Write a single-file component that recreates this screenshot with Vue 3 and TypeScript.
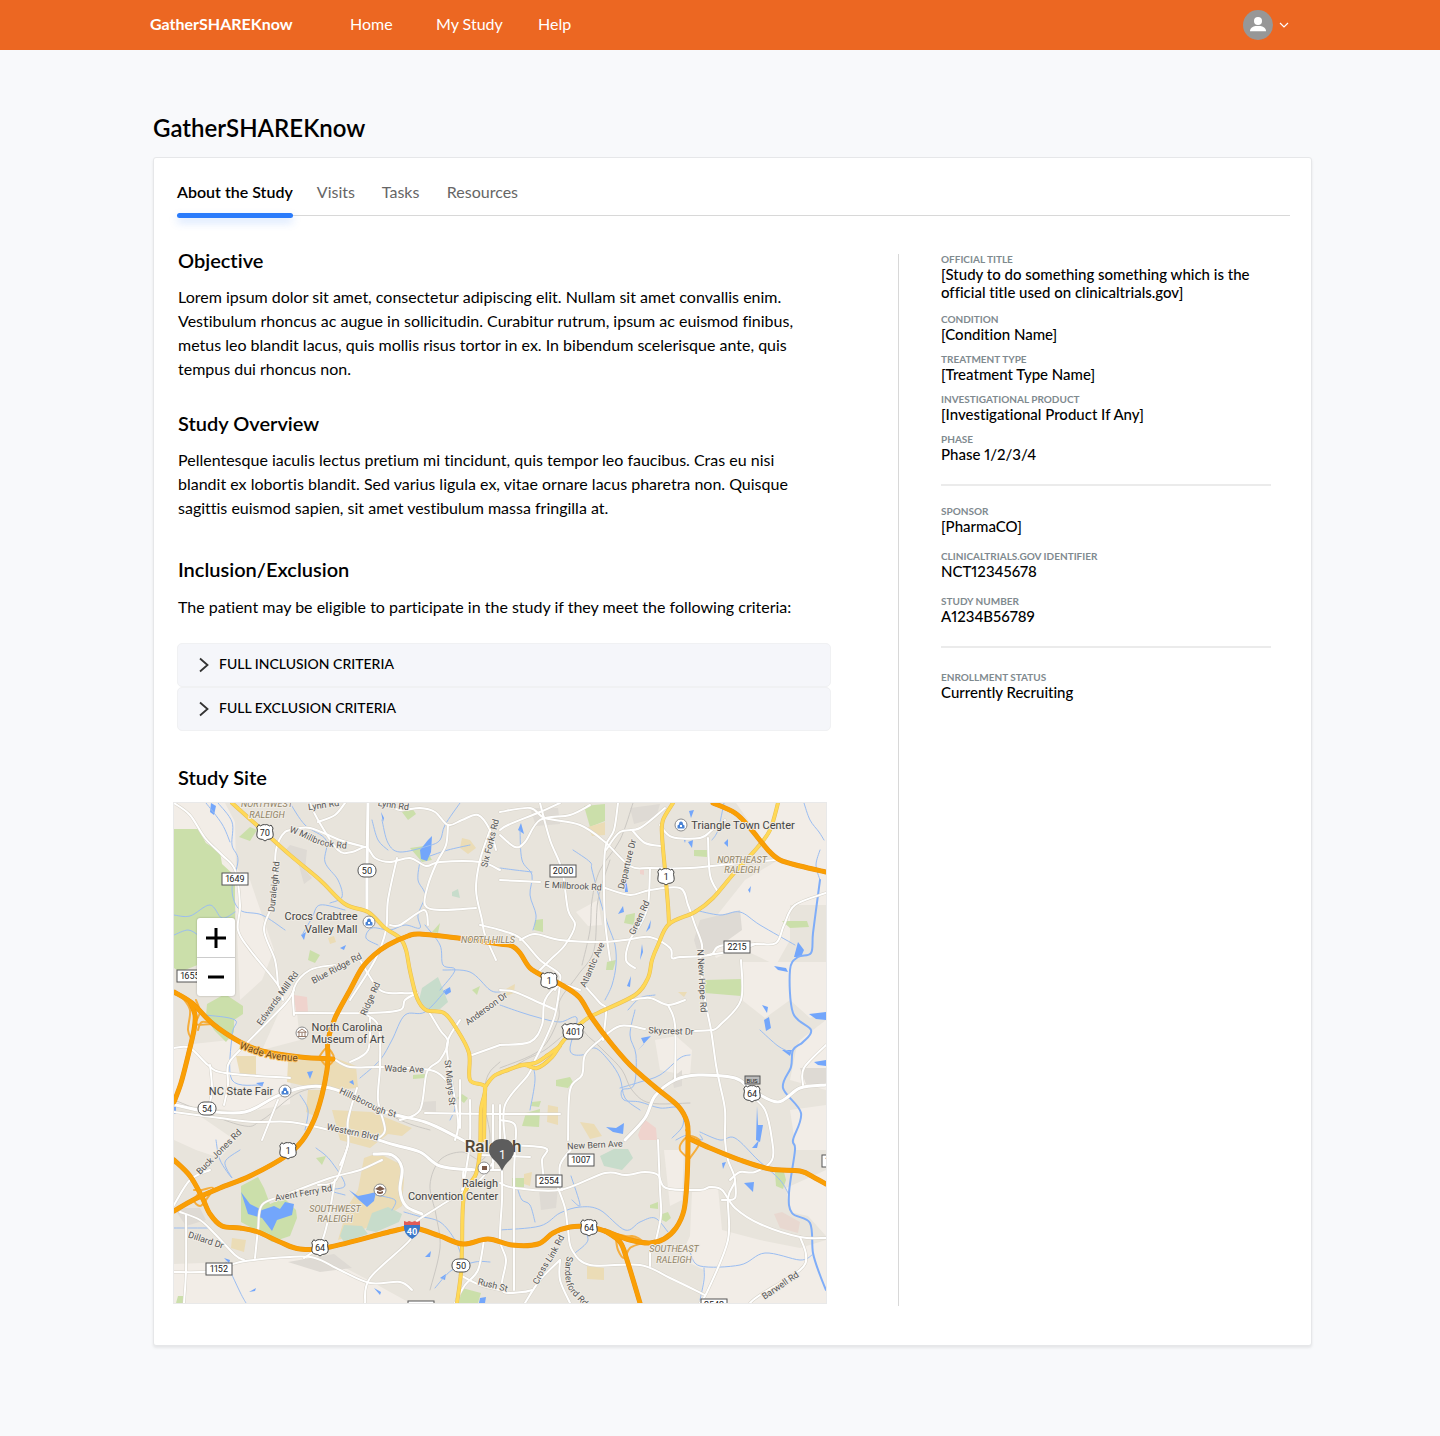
<script setup lang="ts">
import { ref } from 'vue'

interface Detail {
  label: string
  value: string
}
interface Area {
  fill: string
  points: string
}
interface MapLabel {
  text: string
  x: number
  y: number
  angle?: number
  kind?: string
}
interface CurvedLabel {
  id: string
  text: string
  path: string
}
interface Shield {
  kind: 'box' | 'oval' | 'us'
  text: string
  x: number
  y: number
}

const tabs = ['About the Study', 'Visits', 'Tasks', 'Resources']
const activeTab = ref('About the Study')
const criteria = ['FULL INCLUSION CRITERIA', 'FULL EXCLUSION CRITERIA']

const detailGroups: Detail[][] = [
  [
    { label: 'OFFICIAL TITLE', value: '[Study to do something something which is the official title used on clinicaltrials.gov]' },
    { label: 'CONDITION', value: '[Condition Name]' },
    { label: 'TREATMENT TYPE', value: '[Treatment Type Name]' },
    { label: 'INVESTIGATIONAL PRODUCT', value: '[Investigational Product If Any]' },
    { label: 'PHASE', value: 'Phase 1/2/3/4' }
  ],
  [
    { label: 'SPONSOR', value: '[PharmaCO]' },
    { label: 'CLINICALTRIALS.GOV IDENTIFIER', value: 'NCT12345678' },
    { label: 'STUDY NUMBER', value: 'A1234B56789' }
  ],
  [{ label: 'ENROLLMENT STATUS', value: 'Currently Recruiting' }]
]

// Turns a list of waypoints into a rounded path (Catmull-Rom to Bezier).
function curve(points: string): string {
  const p = points.split(' ').map((s) => s.split(',').map(Number))
  let d = `M${p[0][0]} ${p[0][1]}`
  for (let i = 0; i < p.length - 1; i++) {
    const a = p[Math.max(i - 1, 0)]
    const b = p[i]
    const c = p[i + 1]
    const e = p[Math.min(i + 2, p.length - 1)]
    d += `C${b[0] + (c[0] - a[0]) / 6} ${b[1] + (c[1] - a[1]) / 6} ${c[0] - (e[0] - b[0]) / 6} ${c[1] - (e[1] - b[1]) / 6} ${c[0]} ${c[1]}`
  }
  return d
}

const pale = '#f2ede7'
const park = '#cbdfaa'
const tan = '#ebdcb6'
const teal = '#c7dccb'
const grey = '#dedad4'
const lake = '#73a6fb'

const areas: Area[] = [
  { fill: pale, points: '174,803 225,803 235,822 236,868 250,880 262,915 274,950 262,980 240,1000 236,910 232,880 205,845 198,829 174,829' },
  { fill: pale, points: '174,1046 230,1040 262,1052 291,1062 290,1104 245,1112 174,1104' },
  { fill: pale, points: '286,988 294,985 300,1040 262,1050 280,1010' },
  { fill: pale, points: '174,1264 232,1262 262,1260 300,1256 334,1262 372,1282 410,1303 174,1303' },
  { fill: pale, points: '174,1112 200,1116 235,1140 220,1158 196,1150 174,1140' },
  { fill: pale, points: '736,803 826,803 826,905 790,905 790,940 776,965 740,948 716,958 706,940 718,914 745,880 775,862 755,830' },
  { fill: pale, points: '742,962 826,962 826,1012 810,1018 790,1000 765,1018 742,1000' },
  { fill: pale, points: '800,1040 826,1020 826,1090 790,1080 796,1050' },
  { fill: pale, points: '655,1040 676,1036 692,1050 690,1076 660,1070' },
  { fill: pale, points: '692,1192 718,1188 722,1230 760,1240 800,1248 826,1240 826,1303 700,1303 704,1270 680,1258 690,1236' },
  { fill: pale, points: '786,1188 826,1170 826,1236 808,1216 790,1212' },
  { fill: pale, points: '664,1150 684,1150 682,1200 670,1206' },
  { fill: pale, points: '576,912 598,900 602,925 588,926' },
  { fill: pale, points: '790,1110 826,1105 826,1150 796,1150' },
  { fill: grey, points: '284,852 290,845 307,850 305,870 312,878 304,884 298,862' },
  { fill: grey, points: '700,920 740,910 742,930 700,960 694,940' },
  { fill: grey, points: '530,808 558,808 560,824 536,826' },
  { fill: grey, points: '630,808 660,804 656,818 634,824' },
  { fill: grey, points: '539,1190 558,1188 556,1208 541,1210' },
  { fill: grey, points: '420,1102 436,1101 436,1112 421,1110' },
  { fill: grey, points: '672,1078 682,1070 682,1086 674,1088' },
  { fill: grey, points: '174,1208 200,1208 206,1220 186,1226' },
  { fill: grey, points: '288,1262 334,1254 352,1268 320,1272' },
  { fill: grey, points: '800,1068 826,1068 826,1084 806,1084' },
  { fill: park, points: '174,829 198,829 206,843 220,852 222,864 235,876 235,970 200,964 180,972 174,968' },
  { fill: park, points: '207,1004 225,994 243,1006 243,1014 234,1020 234,1032 226,1042 214,1030 206,1016' },
  { fill: park, points: '241,1186 258,1177 264,1188 270,1204 284,1198 296,1210 297,1218 290,1236 272,1242 252,1228 241,1222' },
  { fill: park, points: '239,837 250,827 257,830 250,841' },
  { fill: park, points: '410,848 424,846 432,860 422,862' },
  { fill: park, points: '402,812 412,808 416,814 408,820' },
  { fill: park, points: '584,806 605,804 605,821 590,827' },
  { fill: park, points: '694,850 707,850 707,857 694,856' },
  { fill: park, points: '782,921 807,921 809,927 790,928' },
  { fill: park, points: '705,980 741,979 741,996 705,993' },
  { fill: park, points: '556,1080 570,1077 573,1082 568,1088 556,1086' },
  { fill: park, points: '522,1126 526,1113 540,1109 539,1127' },
  { fill: park, points: '532,1102 541,1101 539,1107 531,1106' },
  { fill: park, points: '626,915 635,913 634,925 624,923' },
  { fill: park, points: '535,920 543,919 543,932 534,930' },
  { fill: park, points: '310,950 320,955 315,963 308,960' },
  { fill: park, points: '432,932 440,923 438,933' },
  { fill: park, points: '472,990 480,986 477,995' },
  { fill: park, points: '457,1098 462,1094 468,1098 464,1103' },
  { fill: park, points: '413,1075 425,1074 425,1078 413,1079' },
  { fill: park, points: '316,1158 326,1156 322,1165' },
  { fill: park, points: '662,1214 668,1212 671,1218 666,1222 662,1220' },
  { fill: park, points: '650,1205 658,1202 658,1209 650,1208' },
  { fill: park, points: '775,1172 784,1172 786,1180 783,1189 776,1186' },
  { fill: park, points: '512,1178 524,1178 524,1187 512,1187' },
  { fill: park, points: '462,1288 481,1293 478,1303 459,1303' },
  { fill: park, points: '178,1296 184,1296 184,1303 176,1303' },
  { fill: park, points: '607,962 616,960 613,970 606,970' },
  { fill: tan, points: '288,1062 330,1056 356,1066 358,1088 330,1090 300,1085 287,1082' },
  { fill: tan, points: '236,1056 256,1056 256,1076 240,1074' },
  { fill: tan, points: '332,1110 372,1112 412,1128 402,1136 388,1134 370,1148 340,1140' },
  { fill: tan, points: '308,1090 322,1090 318,1118 306,1112' },
  { fill: tan, points: '364,1158 378,1153 400,1164 404,1180 402,1206 378,1222 350,1236 338,1240 348,1206 358,1190' },
  { fill: tan, points: '588,827 605,822 605,835 592,836' },
  { fill: tan, points: '462,838 470,840 476,848 468,854 460,848' },
  { fill: tan, points: '328,938 334,936 336,942 330,944' },
  { fill: tan, points: '587,1266 604,1268 604,1280 587,1279' },
  { fill: tan, points: '580,1122 594,1124 602,1136 590,1139' },
  { fill: tan, points: '548,1105 558,1107 558,1125 547,1122' },
  { fill: tan, points: '232,1238 246,1240 244,1252 231,1248' },
  { fill: tan, points: '504,990 515,984 514,993 506,996' },
  { fill: tan, points: '678,992 687,992 684,997' },
  { fill: tan, points: '524,1174 532,1172 530,1186 524,1184' },
  { fill: teal, points: '372,1213 388,1207 402,1214 399,1222 376,1232 366,1230' },
  { fill: teal, points: '344,1225 362,1226 368,1234 344,1242 340,1236' },
  { fill: teal, points: '422,988 438,977 448,1002 440,1009 428,1010 419,1000' },
  { fill: teal, points: '452,892 458,889 460,898 452,896' },
  { fill: teal, points: '600,1156 614,1149 628,1149 633,1158 622,1170 604,1166' },
  { fill: '#efd3cd', points: '294,995 307,997 308,1012 296,1014' },
  { fill: '#efd3cd', points: '638,1135 644,1119 656,1128 657,1140 640,1140' },
  { fill: '#efd3cd', points: '640,870 644,870 644,875 640,874' },
  { fill: '#e8d8d0', points: '774,1214 782,1212 800,1222 798,1233 780,1228' },
  { fill: lake, points: '241,1192 250,1204 262,1210 274,1206 280,1209 285,1202 294,1204 292,1215 277,1220 272,1231 262,1218 248,1214' },
  { fill: lake, points: '349,1190 358,1196 368,1194 376,1192 374,1201 367,1207 359,1200' },
  { fill: lake, points: '420,850 428,840 432,836 431,852 427,861 421,859' },
  { fill: lake, points: '211,803 216,806 214,815 210,812' },
  { fill: lake, points: '381,812 384,818 383,822' },
  { fill: lake, points: '518,830 521,823 524,834' },
  { fill: lake, points: '307,1072 313,1071 310,1079' },
  { fill: lake, points: '349,1082 353,1080 354,1085' },
  { fill: lake, points: '443,991 450,987 451,992 446,995' },
  { fill: lake, points: '646,932 651,920 650,928' },
  { fill: lake, points: '625,892 625,872 628,892' },
  { fill: lake, points: '618,914 623,906 624,912' },
  { fill: lake, points: '640,960 642,944 643,952' },
  { fill: lake, points: '798,942 804,950 801,957 794,957' },
  { fill: lake, points: '774,966 786,968 788,972 778,970' },
  { fill: lake, points: '762,1005 768,1007 767,1013' },
  { fill: lake, points: '764,1020 769,1017 771,1028 766,1031' },
  { fill: lake, points: '809,1014 826,1012 826,1020 816,1019' },
  { fill: lake, points: '814,1062 826,1060 826,1066 818,1065' },
  { fill: lake, points: '782,1050 792,1050 790,1056' },
  { fill: lake, points: '638,1050 644,1044 641,1038 651,1036' },
  { fill: lake, points: '606,1127 616,1128 624,1123 623,1134 613,1132' },
  { fill: lake, points: '744,1183 754,1182 753,1192' },
  { fill: lake, points: '752,1148 759,1140 757,1148' },
  { fill: lake, points: '722,1163 726,1162 723,1169' },
  { fill: lake, points: '724,843 728,839 728,847' },
  { fill: lake, points: '688,842 693,840 692,848' },
  { fill: lake, points: '683,837 686,838 685,843' },
  { fill: lake, points: '757,1106 758,1125 763,1125 760,1142 756,1140' },
  { fill: lake, points: '425,1257 431,1251 430,1257' },
  { fill: lake, points: '440,1278 446,1274 445,1280' },
  { fill: lake, points: '374,1288 381,1292 380,1295' },
  { fill: lake, points: '249,1292 256,1288 255,1291' },
  { fill: lake, points: '224,1258 230,1260 229,1263' },
  { fill: lake, points: '480,1298 486,1297 485,1303 479,1303' },
  { fill: lake, points: '566,1026 571,1032 567,1030' },
  { fill: lake, points: '627,986 631,976 630,987' },
  { fill: lake, points: '301,935 306,932 304,940' },
  { fill: lake, points: '340,948 346,945 344,950' },
  { fill: lake, points: '256,1083 264,1082 262,1087' },
  { fill: lake, points: '174,1107 176,1107 176,1114 174,1114' },
  { fill: lake, points: '689,811 694,810 691,818' },
  { fill: lake, points: '748,890 751,886 750,893' }
]

const bigRivers: string[] = [
  '820,880 818,895 813,933 811,953 798,957 790,970 793,1013 811,1030 803,1042 793,1050 791,1067 783,1088 801,1113 793,1140 795,1150 789,1193 792,1213 810,1223 813,1253 820,1275 826,1290'
]

const rivers: string[] = [
  '804,803 810,820 819,832 824,840',
  '820,850 816,865 820,880',
  '218,803 232,822 232,845 238,860 232,890 240,910 262,915 285,930',
  '174,915 190,916 210,905 222,918 235,912',
  '174,935 188,930 198,935',
  '206,803 222,824 230,842',
  '290,803 305,825 326,840 325,862 338,880 342,897 330,903',
  '460,803 445,825 440,840 428,846 400,852 388,843 382,820',
  '420,861 418,880 425,895 418,915 420,928 405,925 390,930 372,928 366,938 378,945',
  '345,910 320,905 312,918 302,935',
  '372,820 378,840 388,850',
  '470,845 448,850 430,856',
  '425,925 440,945 443,965 455,970 440,990',
  '446,990 425,1012 405,1015 392,1040 380,1060 360,1078',
  '443,970 470,972 490,990 500,992',
  '500,1005 520,1012 540,1018 560,1022 577,1018 570,1050 582,1055 595,1048 610,1062 620,1078 625,1098 640,1110',
  '635,1010 630,1035 636,1055 634,1085 622,1090 624,1100 640,1102 660,1108 680,1108 683,1125 672,1138',
  '520,830 522,860 532,875 530,895 536,915 533,930',
  '500,868 515,870 532,872',
  '573,850 590,862 592,870 600,900 608,925 615,945 616,965 612,985 605,1000',
  '695,910 720,915 740,912 760,925 795,945',
  '620,1088 640,1082 660,1075 680,1058 690,1055',
  '700,1132 720,1140 735,1138 758,1160 780,1180 789,1195',
  '690,1252 700,1266 740,1265 765,1253 800,1260 812,1255',
  '700,1300 704,1280 704,1268',
  '174,1228 210,1228',
  '500,1230 540,1226 560,1213 580,1207 600,1210 625,1230 640,1222 655,1218 668,1232',
  '571,1176 580,1205 572,1200',
  '518,1190 522,1200 530,1205 535,1222',
  '580,1225 588,1240 575,1253',
  '435,1288 452,1270 475,1262 490,1262',
  '404,1212 418,1216 440,1222 455,1240 462,1258',
  '376,1195 395,1200 392,1210',
  '316,1148 330,1160 345,1185 330,1190 345,1195',
  '216,1140 220,1160 232,1178 225,1162 240,1150',
  '205,1015 235,1020 232,1035 232,1080 262,1085',
  '305,1130 308,1110 300,1095',
  '226,1262 240,1292 246,1303',
  '760,1030 778,1046 790,1052',
  '530,1110 535,1080 532,1062',
  '724,803 718,830 712,840',
  '450,1120 455,1108 450,1100',
  '655,995 640,998 628,1010',
  '700,1135 702,1140 688,1135 676,1140'
]

const rails: string[] = [
  '633,803 620,840 600,870 592,900 590,930 582,965',
  '610,860 598,900 594,950 578,975 560,1000 558,1020 540,1050 500,1068',
  '500,1075 525,1060 545,1050 575,1028 590,1038 605,1052 622,1070 632,1090 650,1103 690,1103',
  '174,1100 240,1125 262,1120 300,1092 340,1090 400,1120 430,1130',
  '500,1062 488,1075 484,1100 490,1138 482,1160 462,1152 440,1160 430,1185 436,1215 440,1248 430,1290'
]

const roads: string[] = [
  '174,803 190,815 205,838 222,855 235,870 240,905 238,930 250,950 278,985 283,1000',
  '298,830 285,832 276,850 275,880 272,905 264,930 275,960 278,985',
  '290,830 310,828 340,840 365,847',
  '310,803 318,820 338,850 352,852 366,847 375,858 390,862 410,858 426,866 440,862 480,862 500,870',
  '345,803 335,815 318,822',
  '385,803 400,810 420,808 435,812 448,825 462,820 478,815 490,830 496,850',
  '448,825 446,845 437,862 428,885 425,905 440,910 476,908',
  '428,925 424,910 400,925 390,925',
  '397,858 388,900 386,930 375,960 350,1000',
  '490,830 480,860 476,890 482,920 485,935 496,960',
  '480,925 500,930 520,938 540,960 560,975 555,990',
  '500,835 515,847 525,842 540,820 570,815 590,805',
  '500,830 508,825 540,812 560,803',
  '540,803 550,840 562,870 568,910 575,925 565,945 550,960 540,970',
  '500,812 530,808 545,818 580,825 605,842 630,866 650,868 690,868 730,864 775,860',
  '618,803 614,830 606,845 604,870 605,920 610,960',
  '606,850 620,832 640,828 665,808',
  '632,830 645,843 662,846',
  '660,825 672,837 700,838 712,830 725,820',
  '650,868 648,905 640,925 630,940 626,960 635,968',
  '500,880 540,882',
  '605,888 630,895 650,890 680,888 688,905 695,925 702,945 700,960',
  '520,940 535,934 560,940 600,942 625,940 650,937 670,948 672,958 680,957 710,955 720,946 755,944 776,943 784,925 795,905 826,893',
  '708,838 710,875 718,892',
  '755,944 740,950 708,955',
  '700,960 705,1000 711,1030 716,1065 720,1085 725,1110 725,1140 728,1160 735,1180 728,1198 728,1240 708,1290 700,1303',
  '741,960 741,1000 720,1025 712,1030 690,1031',
  '645,1029 620,1026 600,1040 585,1055 582,1075 570,1090 568,1140',
  '584,985 600,1003 606,1010 603,1040',
  '632,1000 650,998 668,1005 685,1000',
  '668,1005 675,1025 675,1080',
  '560,985 555,1015 545,1040 535,1060 528,1075 505,1105 505,1140',
  '500,990 515,992 540,1003 556,1010',
  '500,1045 530,1042 542,1025 545,1000 560,985 580,990',
  '370,1018 368,1050 350,1062',
  '360,960 380,990 402,993 417,993',
  '417,993 405,1000 400,1010 370,1013 295,1013',
  '294,1015 294,988 310,970 335,965',
  '294,990 284,1005 240,1050 228,1065 228,1085 224,1105',
  '360,1012 378,1025 380,1065 378,1100 385,1130 375,1140',
  '334,1059 350,1067 382,1067 430,1070 446,1080 450,1085',
  '428,1010 440,1030 448,1042 440,1060 427,1072 420,1110 400,1120',
  '460,1020 448,1040 448,1060 458,1120 455,1140',
  '174,1048 190,1048 208,1065 225,1073 290,1078',
  '210,1065 212,1090 208,1110',
  '174,1112 220,1118 255,1122 290,1122 330,1130',
  '500,1045 472,1055',
  '425,1113 500,1114 560,1114',
  '460,1128 460,1080',
  '357,1088 348,1120 348,1145 340,1165',
  '470,1100 470,1140 466,1170 462,1190',
  '382,1160 360,1170 330,1178 285,1195 262,1205 258,1230 255,1258',
  '335,1180 328,1220 320,1245 304,1258',
  '348,1145 336,1180 318,1185',
  '412,1290 400,1282 370,1283 340,1270 315,1258 290,1257 240,1262 220,1270 200,1272 174,1272',
  '500,1150 480,1180 440,1206 412,1225 410,1240 370,1278 365,1303',
  '186,1215 186,1270 184,1303',
  '180,1212 200,1220 215,1234 235,1255 244,1260',
  '174,1205 190,1180 210,1170',
  '262,1140 278,1100',
  '500,1120 515,1125 515,1150 514,1180 514,1290',
  '500,1145 545,1148 542,1160 544,1180',
  '500,1183 515,1188 560,1190 605,1173 625,1175 645,1172 658,1175 666,1188 700,1190 710,1187 722,1190 735,1208 760,1224 800,1237 826,1238',
  '558,1188 565,1208 568,1230 572,1250 590,1265 640,1265 670,1278 705,1295',
  '575,1145 560,1165 562,1190',
  '658,1140 660,1190 661,1215 656,1240',
  '735,1180 735,1198 722,1200',
  '730,1180 740,1172 755,1172 772,1160 772,1140 765,1110 750,1095',
  '800,1237 806,1255 800,1270 760,1295 750,1303',
  '826,1045 804,1068 803,1085',
  '502,1170 502,1200 500,1240 506,1260 502,1290 522,1292 532,1290',
  '484,1240 478,1270 465,1285 455,1303',
  '525,1303 540,1280 560,1260',
  '570,1303 560,1280 560,1260',
  '650,1250 650,1266',
  '460,1275 480,1285 500,1290',
  '478,1170 464,1170 464,1190',
  '500,1170 470,1170',
  '493,1105 493,1170',
  '500,1105 500,1160',
  '480,1155 530,1157'
]

const arterials: string[] = [
  '368,803 367,870 367,912',
  '176,1105 205,1111 245,1112 275,1097 300,1088 325,1087 350,1095 385,1112 425,1122 455,1136 480,1150',
  '374,1154 392,1155 402,1168 400,1190 406,1206 422,1214',
  '372,1138 395,1145 420,1152 440,1166 470,1170',
  '625,1140 645,1118 655,1096 675,1080 698,1075 735,1078 752,1090 778,1102 800,1088 826,1085'
]

const highways: string[] = [
  '232,803 260,828 290,855 320,880 345,904 368,912 385,928 400,938 406,950 410,971 417,998 426,1010 444,1013 456,1028 469,1053 470,1080 485,1087 481,1110 480,1150 476,1174 464,1196 462,1247 461,1273 457,1303',
  '485,1087 484,1140',
  '485,1087 494,1076 508,1070 524,1065 537,1068 552,1057 564,1040 585,1020 600,1012 635,995 648,978 652,960 658,945 669,924 695,912 713,898 735,872 757,848 770,830 778,803',
  '520,1065 535,1063 548,1055 560,1046',
  '673,803 663,820 662,835 665,870 668,905 669,924'
]

const freeways: string[] = [
  '174,1211 195,1199 220,1188 250,1176 286,1156 302,1141 314,1120 322,1095 327,1070 328,1056 328,1040 335,1018 350,990 362,968 374,955 388,945 408,936 420,934 458,938 500,944 512,946 520,953 530,968 545,977 560,984 579,997 592,1018 610,1042 630,1065 655,1087 678,1106 687,1122 688,1140 687,1180 684,1210 676,1228 664,1239 650,1243 630,1240 605,1231 590,1227 570,1227 553,1233 538,1244 512,1245 488,1239 463,1244 440,1236 415,1228 397,1230 330,1247 300,1249 280,1242 258,1232 240,1228 222,1226 210,1214 202,1197 190,1176 174,1160',
  '713,803 735,813 750,828 768,850 780,860 800,866 826,872',
  '174,992 192,1003 213,1024 240,1042 262,1051 300,1057 333,1059',
  '190,1002 195,1015 194,1030 188,1056 181,1083 174,1102',
  '688,1138 710,1148 740,1160 770,1169 800,1171 815,1178 826,1184',
  '605,1231 620,1242 627,1260 640,1303'
]

const ramps: string[] = [
  '182,997 190,1010 188,1030 192,1040',
  '196,1000 200,1012 196,1024 212,1024',
  '198,1030 202,1022 215,1024',
  '319,1057 327,1048 334,1058 327,1066 319,1057',
  '194,1190 202,1190 213,1188 206,1200 200,1206 194,1200 202,1190',
  '686,1130 694,1142 706,1147',
  '688,1158 680,1150 682,1142 690,1136 700,1142 690,1158',
  '616,1240 632,1236 642,1242 630,1248 624,1258 618,1250 616,1240',
  '606,1232 625,1236 650,1243'
]

const labels: MapLabel[] = [
  { text: 'NORTHWEST', x: 267, y: 807, kind: 'district' },
  { text: 'RALEIGH', x: 267, y: 818, kind: 'district' },
  { text: 'NORTHEAST', x: 742, y: 863, kind: 'district' },
  { text: 'RALEIGH', x: 742, y: 873, kind: 'district' },
  { text: 'NORTH HILLS', x: 488, y: 943, kind: 'district' },
  { text: 'SOUTHWEST', x: 335, y: 1212, kind: 'district' },
  { text: 'RALEIGH', x: 335, y: 1222, kind: 'district' },
  { text: 'SOUTHEAST', x: 674, y: 1252, kind: 'district' },
  { text: 'RALEIGH', x: 674, y: 1263, kind: 'district' },
  { text: 'Lynn Rd', x: 324, y: 808, angle: -8 },
  { text: 'Lynn Rd', x: 393, y: 808, angle: 8 },
  { text: 'Duraleigh Rd', x: 277, y: 887, angle: -84 },
  { text: 'Six Forks Rd', x: 493, y: 844, angle: -76 },
  { text: 'E Millbrook Rd', x: 573, y: 889, angle: 3 },
  { text: 'Departure Dr', x: 630, y: 865, angle: -76 },
  { text: 'Green Rd', x: 642, y: 919, angle: -65 },
  { text: 'Atlantic Ave', x: 595, y: 966, angle: -66 },
  { text: 'N New Hope Rd', x: 699, y: 981, angle: 87 },
  { text: 'Blue Ridge Rd', x: 338, y: 971, angle: -28 },
  { text: 'Edwards Mill Rd', x: 280, y: 1000, angle: -54 },
  { text: 'Ridge Rd', x: 373, y: 1000, angle: -66 },
  { text: 'Anderson Dr', x: 488, y: 1011, angle: -36 },
  { text: 'Skycrest Dr', x: 671, y: 1034, angle: 2 },
  { text: 'Wade Ave', x: 404, y: 1072, angle: 2 },
  { text: 'St Marys St', x: 447, y: 1083, angle: 84 },
  { text: 'Western Blvd', x: 352, y: 1135, angle: 12 },
  { text: 'Buck Jones Rd', x: 221, y: 1154, angle: -45 },
  { text: 'Avent Ferry Rd', x: 304, y: 1196, angle: -10 },
  { text: 'Dillard Dr', x: 205, y: 1243, angle: 18 },
  { text: 'New Bern Ave', x: 595, y: 1148, angle: -3 },
  { text: 'Rush St', x: 492, y: 1288, angle: 14 },
  { text: 'Barwell Rd', x: 782, y: 1288, angle: -34 },
  { text: 'Triangle Town Center', x: 743, y: 829, kind: 'place' },
  { text: 'Crocs Crabtree', x: 321, y: 920, kind: 'place' },
  { text: 'Valley Mall', x: 331, y: 933, kind: 'place' },
  { text: 'North Carolina', x: 347, y: 1031, kind: 'place' },
  { text: 'Museum of Art', x: 348, y: 1043, kind: 'place' },
  { text: 'NC State Fair', x: 241, y: 1095, kind: 'place' },
  { text: 'Raleigh', x: 480, y: 1187, kind: 'place' },
  { text: 'Convention Center', x: 453, y: 1200, kind: 'place' },
  { text: 'Raleigh', x: 493, y: 1152, kind: 'city' }
]

const curvedLabels: CurvedLabel[] = [
  { id: 'millbrook', text: 'W Millbrook Rd', path: '289,832 300,836 315,843 330,847 360,850' },
  { id: 'wade', text: 'Wade Avenue', path: '239,1048 262,1056 282,1060 310,1062' },
  { id: 'hillsborough', text: 'Hillsborough St', path: '339,1093 360,1103 380,1113 410,1121' },
  { id: 'crosslink', text: 'Cross Link Rd', path: '538,1285 546,1269 554,1257 563,1240 569,1228' },
  { id: 'sanderford', text: 'Sanderford Rd', path: '567,1256 565,1272 568,1288 578,1300 590,1312' }
]

const shields: Shield[] = [
  { kind: 'us', text: '70', x: 265, y: 833 },
  { kind: 'us', text: '1', x: 666, y: 877 },
  { kind: 'us', text: '1', x: 549, y: 981 },
  { kind: 'us', text: '401', x: 573, y: 1032 },
  { kind: 'us', text: '64', x: 752, y: 1094 },
  { kind: 'us', text: '1', x: 288, y: 1151 },
  { kind: 'us', text: '64', x: 320, y: 1248 },
  { kind: 'us', text: '64', x: 589, y: 1228 },
  { kind: 'oval', text: '50', x: 367, y: 871 },
  { kind: 'oval', text: '54', x: 207, y: 1109 },
  { kind: 'oval', text: '50', x: 461, y: 1266 },
  { kind: 'box', text: '1649', x: 235, y: 879 },
  { kind: 'box', text: '2000', x: 563, y: 871 },
  { kind: 'box', text: '2215', x: 737, y: 947 },
  { kind: 'box', text: '1655', x: 190, y: 976 },
  { kind: 'box', text: '1007', x: 581, y: 1160 },
  { kind: 'box', text: '2554', x: 549, y: 1181 },
  { kind: 'box', text: '1152', x: 219, y: 1269 },
  { kind: 'box', text: '2542', x: 714, y: 1305 },
  { kind: 'box', text: '1010', x: 421, y: 1307 },
  { kind: 'box', text: '1003', x: 835, y: 1161 }
]

const shops = [
  { x: 681, y: 825 },
  { x: 369, y: 922 },
  { x: 285, y: 1091 }
]
</script>

<template>
  <div class="page">
    <header class="topbar">
      <a class="brand" href="#">GatherSHAREKnow</a>
      <nav class="nav" aria-label="Main">
        <a href="#" class="nav-home">Home</a>
        <a href="#" class="nav-study">My Study</a>
        <a href="#">Help</a>
      </nav>
      <button class="account" type="button" aria-label="Account menu">
        <svg width="30" height="30" viewBox="0 0 30 30" aria-hidden="true">
          <circle cx="15" cy="15" r="15" fill="#979797" />
          <circle cx="15" cy="11" r="4" fill="#fff" />
          <path d="M7 21.300c0-3.200 3.200-4.800 5.400-5.200h5.200c2.200.4 5.400 2 5.400 5.200z" fill="#fff" />
        </svg>
        <svg width="10" height="6" viewBox="0 0 10 6" fill="none" stroke="#fff" stroke-width="1.200" aria-hidden="true">
          <path d="M1 1l4 4 4-4" />
        </svg>
      </button>
    </header>

    <main class="content">
      <h1>GatherSHAREKnow</h1>
      <div class="card">
        <div class="tabs" role="tablist">
          <button
            v-for="tab in tabs"
            :key="tab"
            type="button"
            role="tab"
            class="tab"
            :class="{ active: tab === activeTab }"
            :aria-selected="tab === activeTab"
            @click="activeTab = tab"
          >{{ tab }}</button>
        </div>

        <div class="columns">
          <div class="study">
            <section>
              <h2>Objective</h2>
              <p>Lorem ipsum dolor sit amet, consectetur adipiscing elit. Nullam sit amet convallis enim. Vestibulum rhoncus ac augue in sollicitudin. Curabitur rutrum, ipsum ac euismod finibus, metus leo blandit lacus, quis mollis risus tortor in ex. In bibendum scelerisque ante, quis tempus dui rhoncus non.</p>
            </section>
            <section>
              <h2>Study Overview</h2>
              <p>Pellentesque iaculis lectus pretium mi tincidunt, quis tempor leo faucibus. Cras eu nisi blandit ex lobortis blandit. Sed varius ligula ex, vitae ornare lacus pharetra non. Quisque sagittis euismod sapien, sit amet vestibulum massa fringilla at.</p>
            </section>
            <section class="eligibility">
              <h2>Inclusion/Exclusion</h2>
              <p>The patient may be eligible to participate in the study if they meet the following criteria:</p>
              <div class="accordion">
                <button v-for="item in criteria" :key="item" type="button" class="criterion" aria-expanded="false">
                  <svg width="10" height="16" viewBox="0 0 10 16" fill="none" stroke="#333" stroke-width="1.800" aria-hidden="true">
                    <path d="M1 1.500l7.500 6.500L1 14.500" />
                  </svg>
                  <span>{{ item }}</span>
                </button>
              </div>
            </section>
            <section class="site">
              <h2>Study Site</h2>
              <div class="map">
                <svg class="map-canvas" viewBox="174 803 652 500" role="img" aria-label="Map of Raleigh">
                  <rect x="174" y="803" width="652" height="500" fill="#e8e4dc" />
                  <polygon v-for="(a, i) in areas" :key="'a' + i" :points="a.points" :fill="a.fill" />
                  <path v-for="(r, i) in rivers" :key="'w' + i" :d="curve(r)" class="river" />
                  <path v-for="(r, i) in bigRivers" :key="'bw' + i" :d="curve(r)" class="big-river" />
                  <path v-for="(r, i) in rails" :key="'t' + i" :d="curve(r)" class="rail" />
                  <path v-for="(r, i) in roads" :key="'rc' + i" :d="curve(r)" class="road-casing" />
                  <path v-for="(r, i) in arterials" :key="'ac' + i" :d="curve(r)" class="arterial-casing" />
                  <path v-for="(r, i) in roads" :key="'r' + i" :d="curve(r)" class="road" />
                  <path v-for="(r, i) in arterials" :key="'ar' + i" :d="curve(r)" class="arterial" />
                  <path v-for="(r, i) in highways" :key="'hc' + i" :d="curve(r)" class="highway-casing" />
                  <path v-for="(r, i) in highways" :key="'h' + i" :d="curve(r)" class="highway" />
                  <path v-for="(r, i) in ramps" :key="'rp' + i" :d="curve(r)" class="ramp" />
                  <path v-for="(r, i) in freeways" :key="'fc' + i" :d="curve(r)" class="freeway-casing" />
                  <path v-for="(r, i) in freeways" :key="'f' + i" :d="curve(r)" class="freeway" />

                  <text
                    v-for="(l, i) in labels"
                    :key="'l' + i"
                    class="label"
                    :class="l.kind ?? 'street'"
                    :transform="`translate(${l.x} ${l.y}) rotate(${l.angle ?? 0})`"
                  >{{ l.text }}</text>

                  <g v-for="c in curvedLabels" :key="c.id">
                    <path :id="c.id" :d="curve(c.path)" fill="none" />
                    <text class="label street along" :class="{ onroad: c.id === 'wade' }">
                      <textPath :href="'#' + c.id">{{ c.text }}</textPath>
                    </text>
                  </g>

                  <g v-for="(s, i) in shields" :key="'s' + i" :transform="`translate(${s.x} ${s.y})`">
                    <rect v-if="s.kind === 'box'" x="-13" y="-6" width="26" height="12" fill="#fff" stroke="#555" />
                    <rect v-else-if="s.kind === 'oval'" x="-9" y="-7" width="18" height="13" rx="6" fill="#fff" stroke="#555" />
                    <path
                      v-else-if="s.text.length > 2"
                      d="M-8-8q2 2 4 0q2-1 4 0q2-1 4 0q2 2 4 0l3 3q-2 3-1 6q0 5-4 6h-12q-4-1-4-6q1-3-1-6z"
                      fill="#fff"
                      stroke="#444"
                    />
                    <path
                      v-else
                      d="M-6-8q2 2 3 0q3-1 3 0q1-1 3 0q2 2 3 0l2 3q-1 2 0 5q1 5-3 6q-3 0-5 2q-2-2-5-2q-4-1-3-6q1-3 0-5z"
                      fill="#fff"
                      stroke="#444"
                    />
                    <text class="route" y="3">{{ s.text }}</text>
                  </g>

                  <g>
                    <rect x="745" y="1076" width="15" height="8" fill="#bbb" stroke="#555" />
                    <text class="bus" x="752" y="1083">BUS</text>
                    <path d="M404 1225h16q1 9-8 14q-9-5-8-14z" fill="#3b78c9" />
                    <path d="M404 1225v-4l3 1 2-1 3 1 3-1 2 1 3-1v4z" fill="#e25b57" />
                    <text class="interstate" x="412" y="1235">40</text>
                  </g>

                  <g v-for="(s, i) in shops" :key="'p' + i" :transform="`translate(${s.x} ${s.y})`">
                    <circle r="6" fill="#fff" stroke="#8c8c8c" />
                    <path d="M-3.500 3.500v-3l1.500-1q0-3 2-3t2 3l1.500 1v3z" fill="#4a83d4" />
                    <path d="M-1 2v-2h2v2z" fill="#fff" />
                  </g>
                  <g transform="translate(302 1033)">
                    <circle r="6" fill="#fff" stroke="#8c8c8c" />
                    <path d="M-4-1l4-3 4 3zM-3 3v-3M0 3v-3M3 3v-3M-4 3.500h8" fill="none" stroke="#7d5a48" stroke-width=".8" />
                  </g>
                  <g transform="translate(380 1190)">
                    <circle r="6" fill="#fff" stroke="#8c8c8c" />
                    <path d="M-5-1l5-3 5 3-5 2zM-3 1l3 1 3-1v2q-3 2-6 0z" fill="#7d5a48" />
                  </g>
                  <g transform="translate(484 1168)">
                    <circle r="6" fill="#fff" stroke="#8c8c8c" />
                    <rect x="-2" y="-2" width="5" height="4" fill="#7d5a48" />
                  </g>
                  <g>
                    <path d="M502 1171q-3-7-8-11q-5-5-5-9q1-8 7-11q6-2 12 0q6 3 6 11q0 4-4 9q-5 4-8 11z" fill="#5d5d5d" />
                    <text class="pin" x="502" y="1159">1</text>
                  </g>
                </svg>
                <div class="zoom">
                  <button type="button" aria-label="Zoom in">
                    <svg width="20" height="20" viewBox="0 0 20 20" stroke="#000" stroke-width="3" aria-hidden="true">
                      <path d="M0 10h20M10 0v20" />
                    </svg>
                  </button>
                  <button type="button" aria-label="Zoom out">
                    <svg width="20" height="20" viewBox="0 0 20 20" stroke="#000" stroke-width="3" aria-hidden="true">
                      <path d="M2 10h16" />
                    </svg>
                  </button>
                </div>
              </div>
            </section>
          </div>

          <aside class="details">
            <dl v-for="(group, i) in detailGroups" :key="i">
              <div v-for="d in group" :key="d.label">
                <dt>{{ d.label }}</dt>
                <dd>{{ d.value }}</dd>
              </div>
            </dl>
          </aside>
        </div>
      </div>
    </main>
  </div>
</template>

<style>
body {
  background: #f8f9fb;
}
</style>

<style scoped>
.page {
  font-family: Lato, "Open Sans", sans-serif;
  font-size: 16px;
  font-variant-ligatures: none;
  font-variant-numeric: proportional-nums;
  color: #000;
}
.page *,
.page *::before,
.page *::after {
  box-sizing: border-box;
}
button {
  padding: 0;
  border: 0;
  background: none;
  font: inherit;
  font-variant-ligatures: none;
  color: inherit;
  text-align: left;
  cursor: pointer;
}
.topbar {
  display: flex;
  align-items: center;
  height: 50px;
  padding: 0 151px 0 150px;
  background: #ec6722;
  color: #fff;
}
.topbar a {
  color: inherit;
  text-decoration: none;
}
.brand,
.nav {
  padding-bottom: 3px;
}
.brand {
  width: 200px;
  font-weight: 700;
}
.nav {
  display: flex;
  flex: 1;
}
.nav-home {
  width: 86px;
}
.nav-study {
  width: 102px;
}
.account {
  display: flex;
  align-items: center;
  gap: 6px;
}
.content {
  padding: 63px 128px 90px 153px;
}
h1 {
  margin: 0 0 15px;
  font-size: 24px;
  line-height: 29px;
  font-weight: 600;
}
.card {
  padding: 22px 21px 39px 23px;
  background: #fff;
  border: 1px solid #e6e7e9;
  border-radius: 3px;
  box-shadow: 0 2px 3px rgba(0, 0, 0, 0.08);
}
.tabs {
  display: flex;
  gap: 24px;
  height: 36px;
  border-bottom: 1px solid #d8d8d8;
}
.tab {
  position: relative;
  min-width: 41px;
  height: 24px;
  line-height: 24px;
  color: #666;
}
.tab.active {
  color: #000;
  font-weight: 600;
}
.tab.active::after {
  content: "";
  position: absolute;
  left: 0;
  right: 0;
  top: 33px;
  height: 5px;
  border-radius: 3px;
  background: #2a7bfb;
  box-shadow: 0 4px 8px rgba(42, 123, 251, 0.25);
}
.columns {
  display: grid;
  grid-template-columns: minmax(0, 1fr) 392px;
}
.study {
  padding: 32px 68px 3px 1px;
}
h2 {
  margin: 0 0 13px;
  font-size: 20px;
  line-height: 24px;
  font-weight: 600;
}
p {
  margin: 0;
  padding-right: 30px;
  line-height: 24px;
}
section + section {
  margin-top: 30px;
}
section.eligibility {
  margin-top: 37px;
}
.eligibility h2 {
  margin-bottom: 14px;
}
.eligibility p {
  padding-right: 0;
}
section.site {
  margin-top: 34px;
}
.site h2 {
  margin-bottom: 14px;
}
.accordion {
  margin: 24px -1px 0;
}
.criterion {
  display: flex;
  align-items: center;
  gap: 10px;
  width: 100%;
  height: 44px;
  padding: 0 21px;
  border: 1px solid #f0f1f3;
  border-radius: 5px;
  background: #f5f6fa;
  font-size: 14px;
  font-weight: 500;
}
.criterion span {
  padding-bottom: 3px;
}
.map {
  position: relative;
  margin: 0 4px 0 -4px;
  box-shadow: 0 0 0 1px #e9e9e9;
}
.map-canvas {
  display: block;
  width: 100%;
  height: auto;
}
.zoom {
  position: absolute;
  left: 23px;
  top: 115px;
  width: 38px;
  background: #fff;
  border-radius: 3px;
  box-shadow: 0 0 2px rgba(0, 0, 0, 0.3);
}
.zoom button {
  display: flex;
  align-items: center;
  justify-content: center;
  width: 100%;
  height: 39px;
}
.zoom button + button {
  border-top: 1px solid #ccc;
}
.details {
  margin-top: 38px;
  padding: 0 19px 0 42px;
  border-left: 1px solid #d8d8d8;
}
dl {
  display: flex;
  flex-direction: column;
  gap: 15px;
  margin: 0;
}
dl:first-child {
  gap: 10px;
  margin-top: -1px;
}
dl + dl {
  margin-top: 21px;
  padding-top: 19px;
  border-top: 2px solid #ebebeb;
}
dl:last-child {
  padding-top: 23px;
}
dl:first-child > div:first-child {
  padding-bottom: 2px;
}
dt {
  font-size: 10px;
  line-height: 12px;
  font-weight: 700;
  color: #7f8a8f;
}
dd {
  margin: 0;
  font-size: 15px;
  line-height: 18px;
  font-weight: 500;
}
.map-canvas path {
  stroke-linecap: round;
  stroke-linejoin: round;
}
.river,
.big-river,
.rail,
.road,
.road-casing,
.arterial,
.arterial-casing,
.highway,
.highway-casing,
.ramp,
.freeway,
.freeway-casing {
  fill: none;
}
.river { stroke: #9abdf2; stroke-width: 1px; }
.big-river { stroke: #7fadf8; stroke-width: 2px; }
.rail { stroke: #cbc8c3; stroke-width: 1px; }
.road-casing { stroke: #d6d2c9; stroke-width: 3px; }
.road { stroke: #fff; stroke-width: 2px; }
.arterial-casing { stroke: #d3cfc7; stroke-width: 4px; }
.arterial { stroke: #fff; stroke-width: 3px; }
.highway-casing { stroke: #e6bd55; stroke-width: 4px; }
.highway { stroke: #ffd957; stroke-width: 3px; }
.ramp { stroke: #f5ae3d; stroke-width: 2px; }
.freeway-casing { stroke: #ec9410; stroke-width: 5px; }
.freeway { stroke: #fa9f05; stroke-width: 4px; }
.label {
  font-family: Roboto, sans-serif;
  text-anchor: middle;
  paint-order: stroke;
  stroke: #f0ece5;
  stroke-width: 2px;
  stroke-linejoin: round;
}
.street { font-size: 9px; fill: #555; }
.along { text-anchor: start; }
.onroad { stroke: #f9bd5c; fill: #6b4616; font-size: 10px; }
.place { font-size: 11px; fill: #444; }
.district { font-size: 9px; font-style: italic; fill: #8f8264; }
.city { font-size: 17px; font-weight: 500; fill: #4f4635; }
.route,
.bus,
.interstate,
.pin {
  font-family: Roboto, sans-serif;
  font-size: 9px;
  text-anchor: middle;
  fill: #222;
}
.bus { font-size: 6px; }
.interstate { fill: #fff; font-weight: 700; }
.pin { fill: #fff; font-size: 12px; }
</style>
